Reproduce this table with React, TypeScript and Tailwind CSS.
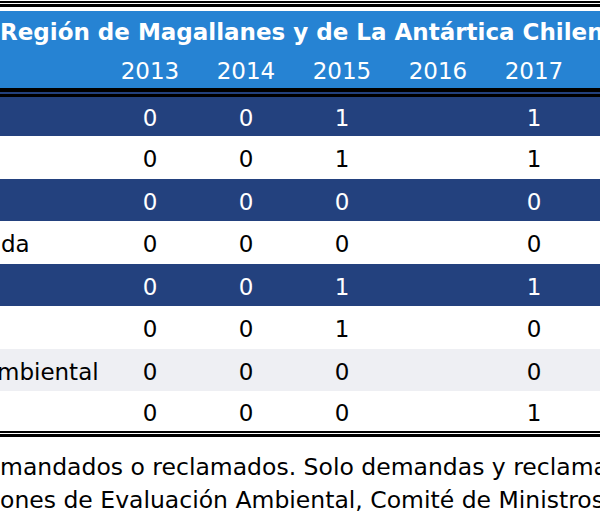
import React from "react";

type Row = {
  label: string;
  values: (number | null)[];
  tone: "navy" | "white" | "gray";
  h: string;
};

const YEARS = ["2013", "2014", "2015", "2016", "2017"];

const ROWS: Row[] = [
  { label: "", values: [0, 0, 1, null, 1], tone: "navy", h: "h-[39px]" },
  { label: "", values: [0, 0, 1, null, 1], tone: "white", h: "h-[43px]" },
  { label: "", values: [0, 0, 0, null, 0], tone: "navy", h: "h-[42px]" },
  { label: "da", values: [0, 0, 0, null, 0], tone: "white", h: "h-[43px]" },
  { label: "", values: [0, 0, 1, null, 1], tone: "navy", h: "h-[42px]" },
  { label: "", values: [0, 0, 1, null, 0], tone: "white", h: "h-[43px]" },
  { label: "mbiental", values: [0, 0, 0, null, 0], tone: "gray", h: "h-[42px]" },
  { label: "", values: [0, 0, 0, null, 1], tone: "white", h: "h-[40px]" },
];

const toneClass = {
  navy: "bg-[#23417e] text-white",
  white: "bg-white text-black",
  gray: "bg-[#eeeff3] text-black",
};

export default function App() {
  return (
    <div className="h-[520px] w-[600px] overflow-hidden bg-white font-['DejaVu_Sans',sans-serif] text-[23px] leading-none">
      {/* doble linea superior */}
      <div className="mt-[1px] h-[2px] bg-black" />
      <div className="h-[1px]" />
      <div className="h-[3px] bg-black" />
      <div className="h-[4px]" />

      {/* encabezado */}
      <div className="bg-[#2683d3] text-white">
        <div className="flex h-[39px] items-center whitespace-nowrap pt-[3px] font-bold">
          Región de Magallanes y de La Antártica Chilena
        </div>
        <div className="flex h-[38px] items-center pt-[4px]">
          <div className="w-[102px] shrink-0" />
          {YEARS.map((y) => (
            <div key={y} className="w-[96px] shrink-0 text-center">
              {y}
            </div>
          ))}
        </div>
      </div>

      <div className="h-[4px] bg-black" />
      <div className="h-[2px] bg-[#23417e]" />
      <div className="h-[3px] bg-black" />

      {/* filas */}
      {ROWS.map((r, i) => (
        <div key={i} className={`flex items-center pt-[4px] ${r.h} ${toneClass[r.tone]}`}>
          <div className="w-[102px] shrink-0 overflow-hidden whitespace-nowrap">
            {r.label === "mbiental" ? (
              <span className="-ml-[3px]">{r.label}</span>
            ) : (
              <span className="pl-[1px]">{r.label}</span>
            )}
          </div>
          {r.values.map((v, j) => (
            <div key={j} className="w-[96px] shrink-0 text-center">
              {v === null ? "" : v}
            </div>
          ))}
        </div>
      ))}

      {/* doble linea inferior */}
      <div className="h-[2px] bg-black" />
      <div className="h-[1px]" />
      <div className="h-[3px] bg-black" />

      {/* notas */}
      <div className="whitespace-nowrap pt-[14px] text-[23.5px] leading-[33px] text-black">
        <p>mandados o reclamados. Solo demandas y reclamaciones presentadas</p>
        <p>ones de Evaluación Ambiental, Comité de Ministros, Tribunales</p>
      </div>
    </div>
  );
}
